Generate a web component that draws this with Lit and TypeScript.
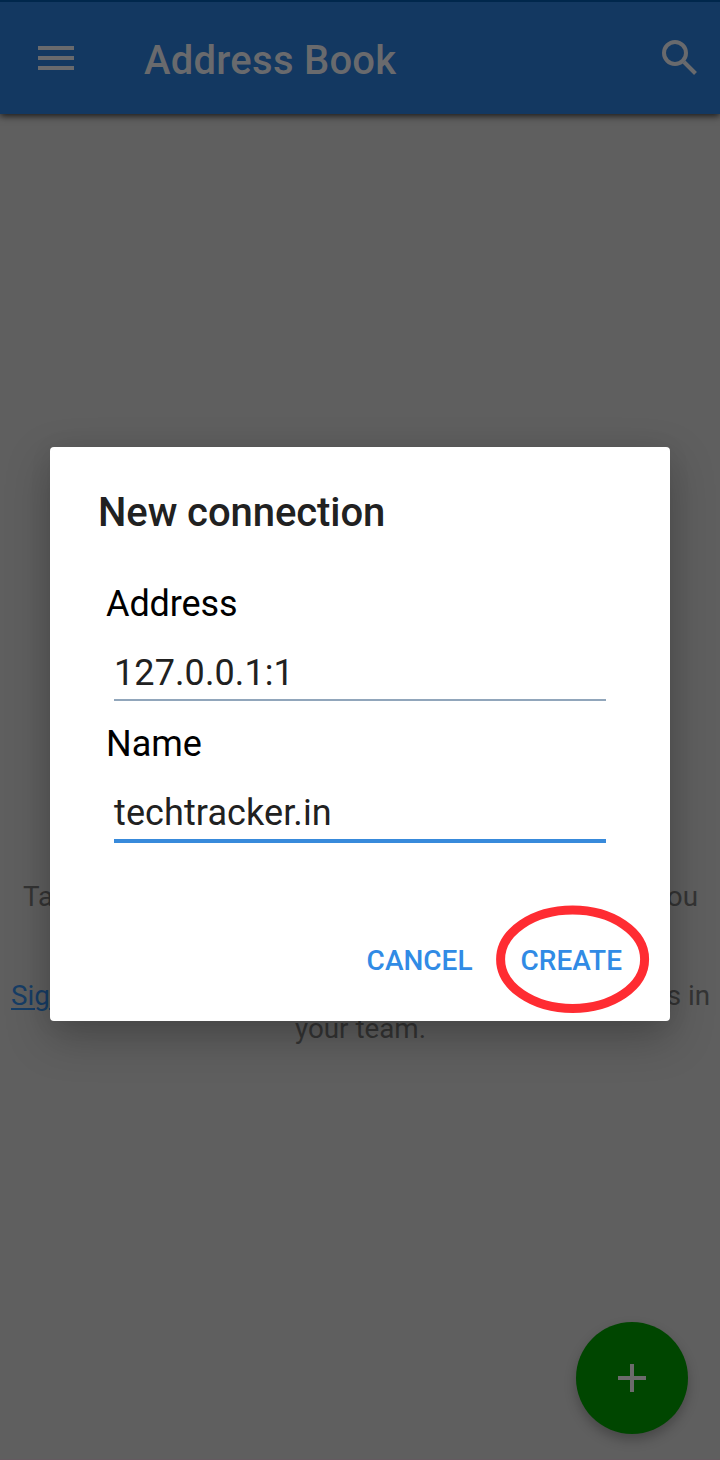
import { LitElement, html, css } from "lit";
import { customElement } from "lit/decorators.js";

@customElement("app-root")
export class AppRoot extends LitElement {
  static styles = css`
    :host { display: block; position: relative; width: 720px; height: 1460px; overflow: hidden; box-sizing: border-box; background: #5f5f5f; font-family: Roboto, sans-serif; }
    * { box-sizing: border-box; }
    svg { display: block; }
    .page { display: flex; flex-direction: column; height: 1460px; border-bottom: 1px solid #645a60; }
    .bar { display: flex; align-items: center; height: 114px; padding: 0 22px 0 38px; border-top: 2px solid #00274c; background: #133861; box-shadow: 0 2px 7px rgba(0,0,0,.75); color: #696a6d; }
    .bar h1 { flex: 1; margin: 6px 0 0 70px; font-size: 40px; line-height: 48px; font-weight: 500; letter-spacing: .25px; white-space: nowrap; }
    .hint { margin-top: 766px; color: #343434; font-size: 27.8px; line-height: 33px; }
    .line { display: flex; justify-content: space-between; }
    .first { padding: 0 22px 0 23px; }
    .second { margin-top: 66px; padding: 0 10px 0 11px; }
    .team { text-align: center; padding-left: 1px; }
    .link { color: #163d66; text-decoration: underline; text-decoration-thickness: 1.5px; text-underline-offset: 3px; }
    .fab { position: absolute; left: 576px; top: 1322px; width: 112px; height: 112px; border-radius: 50%; background: #004600; box-shadow: 0 6px 12px rgba(0,0,0,.25); display: grid; place-items: center; }
    .dialog { position: absolute; left: 50px; top: 447px; width: 620px; height: 574px; border-radius: 4px; background: #fff; box-shadow: 0 16px 44px rgba(0,0,0,.25), 0 2px 24px rgba(0,0,0,.06); padding: 42px 64px 0 56px; display: flex; flex-direction: column; }
    .dialog h2 { margin: 0 0 0 -8px; font-size: 40px; line-height: 48px; font-weight: 500; letter-spacing: -.08px; color: #212121; white-space: nowrap; }
    .label { font-size: 36px; line-height: 42px; color: #000; margin-top: 22px; }
    .label.top { margin-top: 46px; letter-spacing: -.1px; }
    .value { margin: 27px 0 0 8px; height: 49px; font-size: 36px; line-height: 42px; letter-spacing: .1px; color: #212121; border-bottom: 2px solid #91a6bb; }
    .value.active { height: 51px; border-bottom: 4px solid #388adb; }
    .actions { display: flex; justify-content: flex-end; gap: 48px; margin: 101px -16px 0 0; font-size: 28px; line-height: 34px; font-weight: 500; color: #318be5; }
    .ring { position: absolute; left: 446px; top: 458px; }
  `;

  render() {
    return html`
      <div class="page">
        <header class="bar">
          <svg width="36" height="24" viewBox="0 0 36 24" fill="#696a6d"><path d="M0 0h36v4H0zM0 10h36v4H0zM0 20h36v4H0z"/></svg>
          <h1>Address Book</h1>
          <svg width="36" height="36" viewBox="0 0 36 36" fill="none" stroke="#696a6d" stroke-width="4"><circle cx="13" cy="13" r="11"/><path d="M22 22L33.5 33.5"/></svg>
        </header>
        <div class="hint">
          <div class="line first"><span>Ta</span><span>ou</span></div>
          <div class="line second"><span class="link">Sig</span><span>s in</span></div>
          <div class="team">your team.</div>
        </div>
      </div>
      <div class="fab"><svg width="28" height="28" viewBox="0 0 28 28" fill="#6b6b6b"><path d="M12 0h4v12h12v4H16v12h-4V16H0v-4h12z"/></svg></div>
      <section class="dialog">
        <h2>New connection</h2>
        <div class="label top">Address</div>
        <div class="value">127.0.0.1:1</div>
        <div class="label">Name</div>
        <div class="value active">techtracker.in</div>
        <div class="actions"><span>CANCEL</span><span>CREATE</span></div>
        <svg class="ring" width="154" height="109" viewBox="0 0 154 109" fill="none" stroke="#ff2c32" stroke-width="9"><ellipse cx="76.6" cy="54.3" rx="72" ry="49.2"/></svg>
      </section>
    `;
  }
}
